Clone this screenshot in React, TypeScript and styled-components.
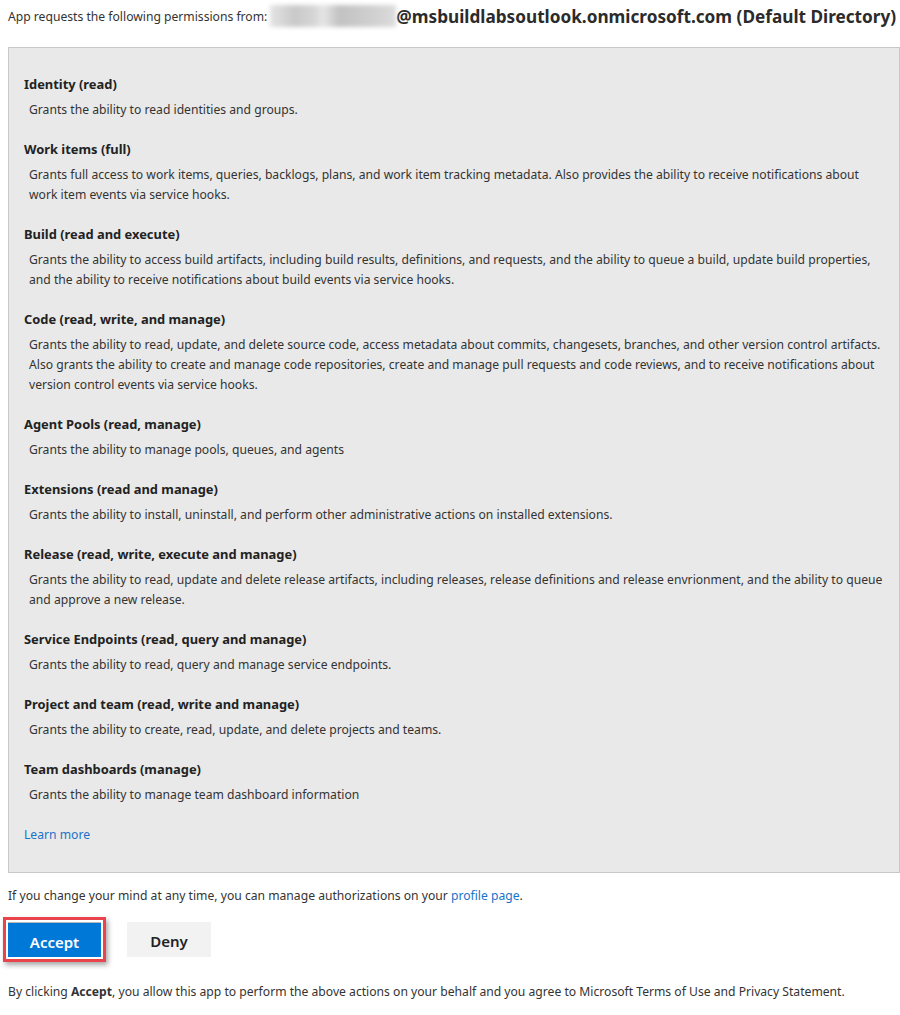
import React from "react";
import styled, { createGlobalStyle } from "styled-components";

const Global = createGlobalStyle`
  html, body { margin: 0; padding: 0; background: #fff; }
  body {
    font-family: "Noto Sans", "Open Sans", "Liberation Sans", sans-serif;
    color: #333;
    font-size: 12.15px;
  }
`;

const Page = styled.div`
  padding: 0 0 0 8px;
  width: 892px;
`;

const Header = styled.div`
  height: 32px;
  display: flex;
  align-items: center;
  white-space: nowrap;
`;

const Lead = styled.span`
  font-size: 12.15px;
  color: #333;
`;

const Blurred = styled.span`
  display: inline-block;
  width: 126px;
  height: 22px;
  margin-left: 3px;
  background: linear-gradient(90deg, #e4e4e4 0%, #c9c9c9 20%, #d6d6d6 35%, #e6e6e6 42%, #c2c2c2 55%, #cfcfcf 80%, #dcdcdc 100%);
  filter: blur(2px);
`;

const Tenant = styled.span`
  font-size: 17.2px;
  font-weight: 700;
  color: #2b2b2b;
`;

const Panel = styled.div`
  margin-top: 15px;
  background: #e9e9e9;
  border: 1px solid #c8c8c8;
  padding: 26px 15px 27px 15px;
  display: flex;
  flex-direction: column;
  gap: 20px;
`;

const Section = styled.div`
  display: flex;
  flex-direction: column;
  gap: 5px;
`;

const Title = styled.div`
  font-weight: 700;
  font-size: 12.9px;
  line-height: 20px;
  color: #222;
`;

const Desc = styled.div`
  padding-left: 5px;
  padding-top: 1px;
  margin-bottom: -1px;
  font-size: 12.15px;
  line-height: 20px;
  color: #333;
  white-space: nowrap;
`;

const Link = styled.a`
  color: #1a73c8;
  text-decoration: none;
  line-height: 20px;
`;

const PanelLink = styled(Link)`
  padding-top: 1px;
`;

const Note = styled.div`
  margin-top: 13px;
  line-height: 20px;
`;

const Buttons = styled.div`
  margin-top: 11px;
  display: flex;
  align-items: center;
  gap: 21px;
`;

const Annotation = styled.div`
  margin-left: -5px;
  padding: 2px;
  border: 3px solid #e9444b;
  box-shadow: 2px 3px 5px rgba(0, 0, 0, 0.35);
  display: flex;
`;

const Button = styled.button<{ $primary?: boolean }>`
  font-family: inherit;
  font-size: 15px;
  font-weight: 600;
  height: 35px;
  width: ${(p) => (p.$primary ? "93px" : "84px")};
  border: none;
  border-top: ${(p) => (p.$primary ? "1px solid #b9b9b9" : "none")};
  background: ${(p) => (p.$primary ? "#0078d7" : "#f2f2f2")};
  color: ${(p) => (p.$primary ? "#fff" : "#222")};
  cursor: pointer;
  padding: 3px 0 0 0;
`;

const Footer = styled.div`
  margin-top: 20px;
  line-height: 20px;
  white-space: nowrap;
`;

type Perm = { title: string; lines: string[] };

const perms: Perm[] = [
  { title: "Identity (read)", lines: ["Grants the ability to read identities and groups."] },
  {
    title: "Work items (full)",
    lines: [
      "Grants full access to work items, queries, backlogs, plans, and work item tracking metadata. Also provides the ability to receive notifications about",
      "work item events via service hooks.",
    ],
  },
  {
    title: "Build (read and execute)",
    lines: [
      "Grants the ability to access build artifacts, including build results, definitions, and requests, and the ability to queue a build, update build properties,",
      "and the ability to receive notifications about build events via service hooks.",
    ],
  },
  {
    title: "Code (read, write, and manage)",
    lines: [
      "Grants the ability to read, update, and delete source code, access metadata about commits, changesets, branches, and other version control artifacts.",
      "Also grants the ability to create and manage code repositories, create and manage pull requests and code reviews, and to receive notifications about",
      "version control events via service hooks.",
    ],
  },
  { title: "Agent Pools (read, manage)", lines: ["Grants the ability to manage pools, queues, and agents"] },
  {
    title: "Extensions (read and manage)",
    lines: ["Grants the ability to install, uninstall, and perform other administrative actions on installed extensions."],
  },
  {
    title: "Release (read, write, execute and manage)",
    lines: [
      "Grants the ability to read, update and delete release artifacts, including releases, release definitions and release envrionment, and the ability to queue",
      "and approve a new release.",
    ],
  },
  {
    title: "Service Endpoints (read, query and manage)",
    lines: ["Grants the ability to read, query and manage service endpoints."],
  },
  {
    title: "Project and team (read, write and manage)",
    lines: ["Grants the ability to create, read, update, and delete projects and teams."],
  },
  { title: "Team dashboards (manage)", lines: ["Grants the ability to manage team dashboard information"] },
];

export default function App() {
  return (
    <Page>
      <Global />
      <Header>
        <Lead>App requests the following permissions from:</Lead>
        <Blurred />
        <Tenant>@msbuildlabsoutlook.onmicrosoft.com (Default Directory)</Tenant>
      </Header>
      <Panel>
        {perms.map((p) => (
          <Section key={p.title}>
            <Title>{p.title}</Title>
            <Desc>
              {p.lines.map((l, i) => (
                <React.Fragment key={i}>
                  {l}
                  {i < p.lines.length - 1 && <br />}
                </React.Fragment>
              ))}
            </Desc>
          </Section>
        ))}
        <PanelLink href="#">Learn more</PanelLink>
      </Panel>
      <Note>
        If you change your mind at any time, you can manage authorizations on your <Link href="#">profile page</Link>.
      </Note>
      <Buttons>
        <Annotation>
          <Button $primary>Accept</Button>
        </Annotation>
        <Button>Deny</Button>
      </Buttons>
      <Footer>
        By clicking <b>Accept</b>, you allow this app to perform the above actions on your behalf and you agree to Microsoft Terms of Use and Privacy Statement.
      </Footer>
    </Page>
  );
}
